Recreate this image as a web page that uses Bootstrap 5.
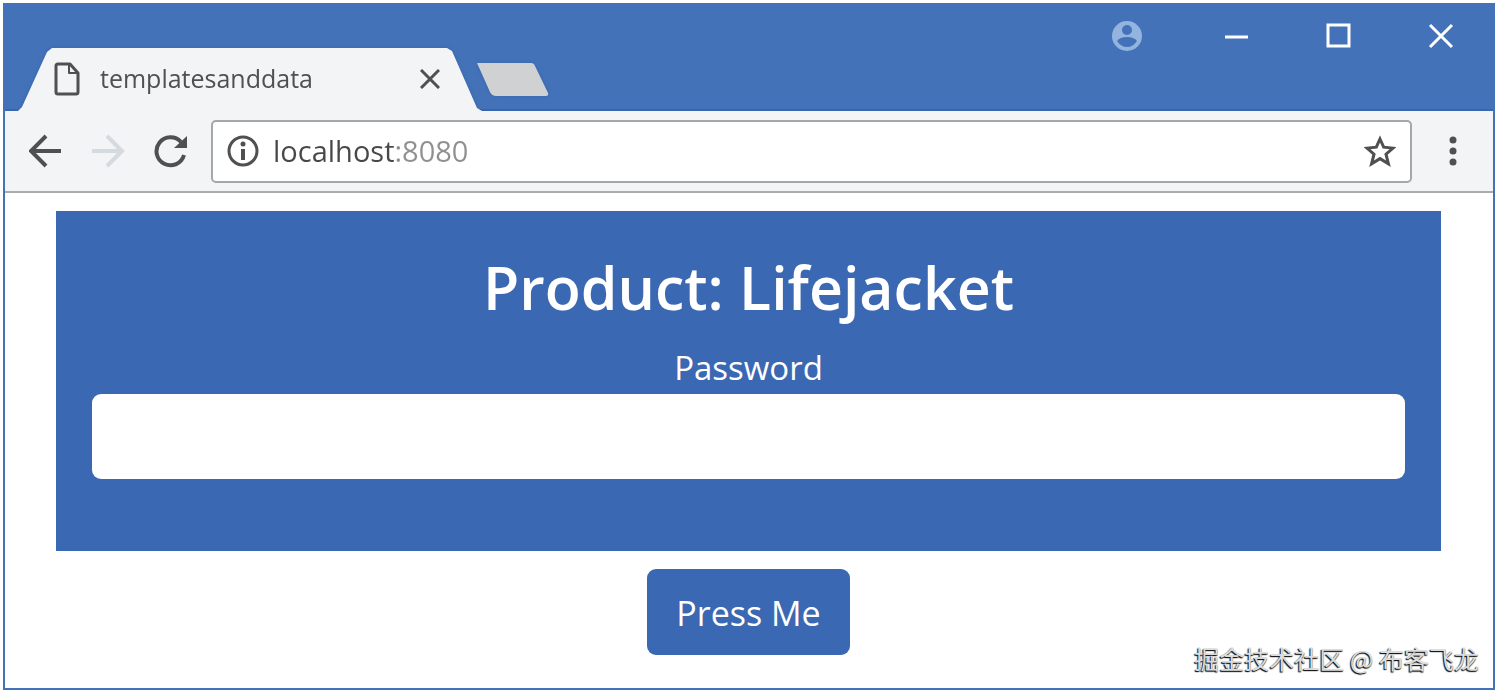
<!DOCTYPE html>
<html lang="en">
<head>
<meta charset="utf-8">
<meta name="viewport" content="width=device-width, initial-scale=1">
<title>templatesanddata</title>
<link href="https://cdn.jsdelivr.net/npm/bootstrap@5.3.0/dist/css/bootstrap.min.css" rel="stylesheet">
<style>
  :root { --frame: #4472b8; --edge: #3866b0; --panel: #3b68b2; --chrome: #f3f4f6; --ink: #505050; }
  body { font-family: "Open Sans", "Noto Sans CJK SC", sans-serif; background: #fff; padding: 3px 5px 5px 3px; }
  .window-frame { border: 2px solid var(--frame); min-height: calc(100vh - 8px); }
  .title-bar { background: var(--frame); height: 106px; border-bottom: 2px solid var(--edge); }
  .plain-btn { background: none; border: 0; padding: 0; line-height: 0; color: inherit; }
  .tab-edge { filter: drop-shadow(0 0 2px var(--edge)); margin: 43px 0 -2px 13px; }
  .tab-shape { background: var(--chrome); color: var(--ink); width: 464px; height: 63px; padding: 0 42px 2px 36px;
    clip-path: polygon(0 100%, 4px 59px, 29px 4px, 34px 0, 429px 0, 434px 3px, 459px 60px, 100% 100%); }
  .tab-label { font-size: 25px; line-height: 32px; font-weight: 500; padding-bottom: 2px; }
  .new-tab { filter: drop-shadow(0 0 2px var(--edge)); margin: 58px 0 0 -6px; }
  .controls { color: #fff; margin: 15px 39px 0 0; gap: 76px; }
  .tool-bar { background: var(--chrome); color: var(--ink); height: 82px; border-bottom: 2px solid #a9abad; padding: 0 15px 0 24px; position: relative; }
  .address { background: #fff; border: 2px solid #a5a7a9; border-radius: 5px; height: 63px; padding: 0 14px; gap: 14px; }
  .address input { border: 0; outline: 0; font-size: 29px; line-height: 40px; font-weight: 500; min-width: 0; padding: 0; color: #484848;
    background: linear-gradient(to right, #484848 121px, #909090 121px); -webkit-background-clip: text; background-clip: text;
    -webkit-text-fill-color: transparent; }
  .page-area { padding: 18px 52px 32px 51px; }
  .panel { background: var(--panel); padding: 34px 36px 72px; }
  .panel h1 { font-size: 59px; line-height: 84px; font-weight: 600; margin-bottom: 16px; }
  .panel label { font-size: 33px; line-height: 46px; padding-bottom: 3px; }
  .panel .form-control { height: 85px; border: 0; border-radius: 9px; font-size: 33px; }
  .press { background: var(--panel); color: #fff; font-size: 34px; line-height: 46px; padding: 21px 29px 19px; border-radius: 9px; border: 0; margin-top: 18px; }
  .watermark { position: absolute; right: 21px; bottom: 19px; font: 25px/36px "Noto Sans CJK SC", sans-serif; color: #dcdcdc; text-shadow: -1px 1px 1px #111, 0 1px 1px #555; }
</style>
</head>
<body>
<div class="window-frame d-flex flex-column">
  <header class="title-bar d-flex align-items-start">
    <div class="tab-edge">
      <div class="tab-shape d-flex align-items-center">
        <svg width="26" height="34" viewBox="0 0 26 34" fill="none" stroke="currentColor" stroke-width="3" stroke-linejoin="round"><path d="M4 2h12l8 9v19q0 2-2 2H4q-2 0-2-2V4q0-2 2-2z"/><path d="M15 2v9h9" stroke-width="2"/></svg>
        <span class="tab-label ms-3 ps-1 flex-grow-1">templatesanddata</span>
        <button class="plain-btn" type="button" aria-label="Close tab"><svg width="20" height="20" viewBox="0 0 20 20" stroke="currentColor" stroke-width="3"><path d="M1 1l18 18M19 1L1 19"/></svg></button>
      </div>
    </div>
    <button class="plain-btn new-tab" type="button" aria-label="New tab"><svg width="74" height="35" viewBox="0 0 74 35"><path d="M1 0h54q3 0 4 3l13 27q1 3-2 3H20q-4 0-6-4z" fill="#cfd1d3"/></svg></button>
    <div class="controls d-flex align-items-center ms-auto">
      <button class="plain-btn" type="button" aria-label="Profile"><svg width="32" height="32" viewBox="0 0 32 32"><circle cx="15" cy="16" r="15" fill="#94b4e0"/><circle cx="15" cy="10" r="5" fill="#4472b8"/><path d="M5 21q3-4 10-4t10 4q-4 6-10 6T5 21z" fill="#4472b8"/></svg></button>
      <button class="plain-btn ps-1" type="button" aria-label="Minimize"><svg width="26" height="26" viewBox="0 0 26 26"><path d="M1 14h23" stroke="#fff" stroke-width="3"/></svg></button>
      <button class="plain-btn" type="button" aria-label="Maximize"><svg width="26" height="26" viewBox="0 0 26 26"><path d="M2 2h21v21H2z" fill="none" stroke="#fff" stroke-width="3"/></svg></button>
      <button class="plain-btn" type="button" aria-label="Close"><svg width="26" height="26" viewBox="0 0 26 26"><path d="M2 2l22 22M24 2L2 24" stroke="#fff" stroke-width="3"/></svg></button>
    </div>
  </header>
  <nav class="tool-bar d-flex align-items-center">
    <button class="plain-btn" type="button" aria-label="Back"><svg width="34" height="34" viewBox="0 0 34 34" fill="none" stroke="currentColor" stroke-width="4"><path d="M17 2L2 17l15 15M2 17h30"/></svg></button>
    <button class="plain-btn ms-4 ps-1" type="button" aria-label="Forward"><svg width="34" height="34" viewBox="0 0 34 34" fill="none" stroke="#d5dae1" stroke-width="4"><path d="M16 2l15 15-15 15M31 17H1"/></svg></button>
    <button class="plain-btn ms-4 ps-1" type="button" aria-label="Reload"><svg width="34" height="34" viewBox="0 0 34 34"><path d="M31 21A14 14 0 1 1 28 8" fill="none" stroke="currentColor" stroke-width="4"/><path d="M34 2v12H21z" fill="currentColor"/></svg></button>
    <div class="address d-flex align-items-center flex-grow-1 ms-4 me-3">
      <button class="plain-btn" type="button" aria-label="Site information"><svg width="32" height="32" viewBox="0 0 32 32"><circle cx="16" cy="16" r="14" fill="none" stroke="currentColor" stroke-width="3"/><path d="M14 14h4v11h-4z" fill="currentColor"/><circle cx="16" cy="9" r="2.500" fill="currentColor"/></svg></button>
      <input class="flex-grow-1" type="text" value="localhost:8080" aria-label="Address">
      <button class="plain-btn" type="button" aria-label="Bookmark"><svg width="32" height="32" viewBox="0 0 32 32"><path d="M16 4l3.700 8.200 9.300.9-7 6.100 2.400 9.600L16 23.600l-8.400 5.200L10 19.200l-7-6.100 9.300-.9z" fill="none" stroke="currentColor" stroke-width="3"/></svg></button>
    </div>
    <button class="plain-btn px-2" type="button" aria-label="Menu"><svg width="34" height="34" viewBox="0 0 34 34" fill="currentColor"><circle cx="17" cy="6" r="3.500"/><circle cx="17" cy="17" r="3.500"/><circle cx="17" cy="28" r="3.500"/></svg></button>
  </nav>
  <main class="page-area text-center">
    <section class="panel text-white">
      <h1>Product: Lifejacket</h1>
      <label class="d-block" for="pw">Password</label>
      <input class="form-control" id="pw" type="password">
    </section>
    <button class="btn press" type="button">Press Me</button>
  </main>
</div>
<div class="watermark">掘金技术社区 @ 布客飞龙</div>
<script src="https://cdn.jsdelivr.net/npm/bootstrap@5.3.0/dist/js/bootstrap.bundle.min.js"></script>
</body>
</html>
